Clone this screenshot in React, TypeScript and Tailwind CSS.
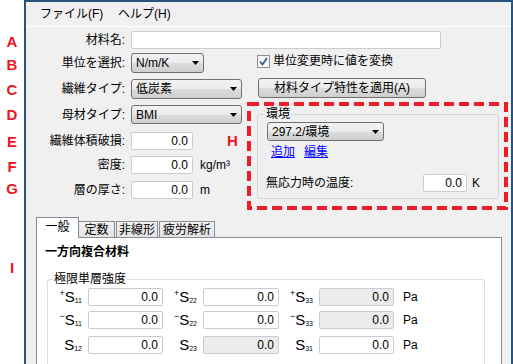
import type { ReactNode } from "react";

function Combo({ className, text }: { className: string; text: string }) {
  return (
    <div
      className={`flex items-center justify-between rounded-[3px] border border-[#707070] bg-[linear-gradient(#f2f2f2,#ebebeb_50%,#dddddd_50%,#cfcfcf)] pl-[4px] pr-[4px] ${className}`}
    >
      <span>{text}</span>
      <svg width="7" height="4" viewBox="0 0 7 4">
        <path d="M0 0h7L3.5 4z" fill="#000" />
      </svg>
    </div>
  );
}

function Field({
  className,
  value,
  disabled,
}: {
  className: string;
  value: string;
  disabled?: boolean;
}) {
  return (
    <div
      className={`flex items-center justify-end rounded-[2px] border border-[#c9ccd2] pr-[4px] ${
        disabled ? "bg-[#ececec]" : "bg-white"
      } ${className}`}
    >
      {value}
    </div>
  );
}

function Label({ children }: { children: ReactNode }) {
  return <div className="mr-[6px] w-[99px] text-right">{children}</div>;
}

function SLabel({ sign, sub }: { sign?: string; sub: string }) {
  return (
    <div className="flex h-[18px] w-[40px] items-start justify-end pr-[6px]">
      <span className="mt-[1px] text-[9px] leading-[9px]">{sign}</span>
      <span className="text-[15px] leading-[18px]">S</span>
      <span className="mt-[9px] text-[7px] leading-[7px]">{sub}</span>
    </div>
  );
}

export default function App() {
  return (
    <div className="flex h-[364px] w-[513px] overflow-hidden bg-white font-['Liberation_Sans','Noto_Sans_CJK_JP',sans-serif] text-[12px] leading-[14px] text-black">
      {/* 注釈の文字 */}
      <div className="flex w-[24px] flex-col items-center text-[15px] font-bold leading-[16px] text-[#f0141e]">
        <div className="mt-[34px]">A</div>
        <div className="mt-[7px]">B</div>
        <div className="mt-[9px]">C</div>
        <div className="mt-[9px]">D</div>
        <div className="mt-[11px]">E</div>
        <div className="mt-[9px]">F</div>
        <div className="mt-[6px]">G</div>
        <div className="mt-[63px]">I</div>
      </div>

      {/* ウィンドウ */}
      <div className="flex flex-1 flex-col border-x-2 border-t-2 border-[#2a527e] bg-[#f0f0f0]">
        {/* メニュー */}
        <div className="flex h-[25px] shrink-0 items-center border-b border-white pl-[14px]">
          <span className="w-[78px]">ファイル(F)</span>
          <span>ヘルプ(H)</span>
        </div>

        <div className="mt-[4px] flex h-[18px] shrink-0 items-center">
          <Label>材料名:</Label>
          <Field className="h-[18px] w-[310px]" value="" />
        </div>

        <div className="flex shrink-0">
          {/* 左 */}
          <div className="flex w-[221px] flex-col">
            <div className="mt-[4px] flex h-[20px] items-center">
              <Label>単位を選択:</Label>
              <Combo className="h-[20px] w-[73px]" text="N/m/K" />
            </div>
            <div className="mt-[6px] flex h-[20px] items-center">
              <Label>繊維タイプ:</Label>
              <Combo className="h-[20px] w-[111px]" text="低炭素" />
            </div>
            <div className="mt-[6px] flex h-[19px] items-center">
              <Label>母材タイプ:</Label>
              <Combo className="h-[19px] w-[111px]" text="BMI" />
            </div>
            <div className="mt-[8px] flex h-[18px] items-center">
              <Label>繊維体積破損:</Label>
              <Field className="h-[18px] w-[62px]" value="0.0" />
              <span className="ml-[34px] text-[15px] font-bold leading-[16px] text-[#f0141e]">H</span>
            </div>
            <div className="mt-[6px] flex h-[18px] items-center">
              <Label>密度:</Label>
              <Field className="h-[18px] w-[62px]" value="0.0" />
              <span className="ml-[7px]">kg/m³</span>
            </div>
            <div className="mt-[7px] flex h-[18px] items-center">
              <Label>層の厚さ:</Label>
              <Field className="h-[18px] w-[62px]" value="0.0" />
              <span className="ml-[7px]">m</span>
            </div>
          </div>

          {/* 右 */}
          <div className="flex flex-col">
            <div className="mt-[4px] flex h-[16px] items-center pl-[10px]">
              <div className="flex h-[13px] w-[13px] items-center justify-center border border-[#8f8f8f] bg-[linear-gradient(#f0f0f0,#fafafa)]">
                <svg width="9" height="9" viewBox="0 0 9 9">
                  <path d="M1 4.5l2.5 3L8 1" fill="none" stroke="#3e5a8a" strokeWidth="1.8" />
                </svg>
              </div>
              <span className="ml-[3px]">単位変更時に値を変換</span>
            </div>
            <div className="ml-[11px] mt-[9px] flex h-[20px] w-[168px] items-center justify-center rounded-[3px] border border-[#707070] bg-[linear-gradient(#f2f2f2,#ebebeb_50%,#dddddd_50%,#cfcfcf)]">
              材料タイプ特性を適用(A)
            </div>
            <div className="relative mt-[4px] h-[108px] w-[261px] pb-[11px] pl-[10px] pr-[9px] pt-[12px]">
              <svg className="absolute inset-0" width="261" height="108">
                <rect
                  x="2"
                  y="2"
                  width="257"
                  height="104"
                  fill="none"
                  stroke="#ee1c25"
                  strokeWidth="4"
                  strokeDasharray="10 5"
                />
              </svg>
              <div className="relative flex h-full flex-col rounded-[3px] border border-[#d5d5d5]">
                <span className="absolute -top-[8px] left-[7px] bg-[#f0f0f0] px-[1px]">環境</span>
                <Combo className="ml-[9px] mt-[7px] h-[19px] w-[117px]" text="297.2/環境" />
                <div className="ml-[13px] mt-[4px] flex h-[14px] items-center gap-[9px] text-[#0000ff] underline">
                  <span>追加</span>
                  <span>編集</span>
                </div>
                <div className="mt-[15px] flex h-[18px] items-center pl-[8px]">
                  <span className="w-[157px]">無応力時の温度:</span>
                  <Field className="h-[18px] w-[44px]" value="0.0" />
                  <span className="ml-[5px]">K</span>
                </div>
              </div>
            </div>
          </div>
        </div>

        {/* タブ */}
        <div className="mt-[7px] flex h-[20px] shrink-0 items-end pl-[10px]">
          <div className="relative z-10 -mb-px flex h-[21px] w-[43px] items-center justify-center border-x border-t border-[#898c95] bg-white pb-[2px]">
            一般
          </div>
          <div className="flex h-[16px] w-[36px] items-center justify-center border-r border-t border-[#898c95] bg-[linear-gradient(#f2f2f2,#e3e3e3)]">
            定数
          </div>
          <div className="ml-[1px] flex h-[16px] w-[42px] items-center justify-center border-x border-t border-[#898c95] bg-[linear-gradient(#f2f2f2,#e3e3e3)]">
            非線形
          </div>
          <div className="ml-[1px] flex h-[16px] w-[56px] items-center justify-center border-x border-t border-[#898c95] bg-[linear-gradient(#f2f2f2,#e3e3e3)]">
            疲労解析
          </div>
        </div>
        <div className="ml-[10px] flex h-[200px] w-[466px] shrink-0 flex-col border border-[#898c95] bg-white">
          <div className="ml-[8px] mt-[7px] font-bold">一方向複合材料</div>
          <div className="relative ml-[10px] mt-[20px] h-[160px] w-[438px] rounded-[3px] border border-[#d5dfe5] pt-[8px]">
            <span className="absolute -top-[8px] left-[5px] bg-white px-[1px]">極限単層強度</span>
            <div className="flex h-[18px] items-center">
              <SLabel sign="+" sub="11" />
              <Field className="h-[18px] w-[75px]" value="0.0" />
              <SLabel sign="+" sub="22" />
              <Field className="h-[18px] w-[76px]" value="0.0" />
              <SLabel sign="+" sub="33" />
              <Field className="h-[18px] w-[75px]" value="0.0" disabled />
              <span className="ml-[9px]">Pa</span>
            </div>
            <div className="mt-[5px] flex h-[18px] items-center">
              <SLabel sign="−" sub="11" />
              <Field className="h-[18px] w-[75px]" value="0.0" />
              <SLabel sign="−" sub="22" />
              <Field className="h-[18px] w-[76px]" value="0.0" />
              <SLabel sign="−" sub="33" />
              <Field className="h-[18px] w-[75px]" value="0.0" disabled />
              <span className="ml-[9px]">Pa</span>
            </div>
            <div className="mt-[7px] flex h-[18px] items-center">
              <SLabel sub="12" />
              <Field className="h-[18px] w-[75px]" value="0.0" />
              <SLabel sub="23" />
              <Field className="h-[18px] w-[76px]" value="0.0" disabled />
              <SLabel sub="31" />
              <Field className="h-[18px] w-[75px]" value="0.0" />
              <span className="ml-[9px]">Pa</span>
            </div>
          </div>
        </div>
      </div>
    </div>
  );
}
